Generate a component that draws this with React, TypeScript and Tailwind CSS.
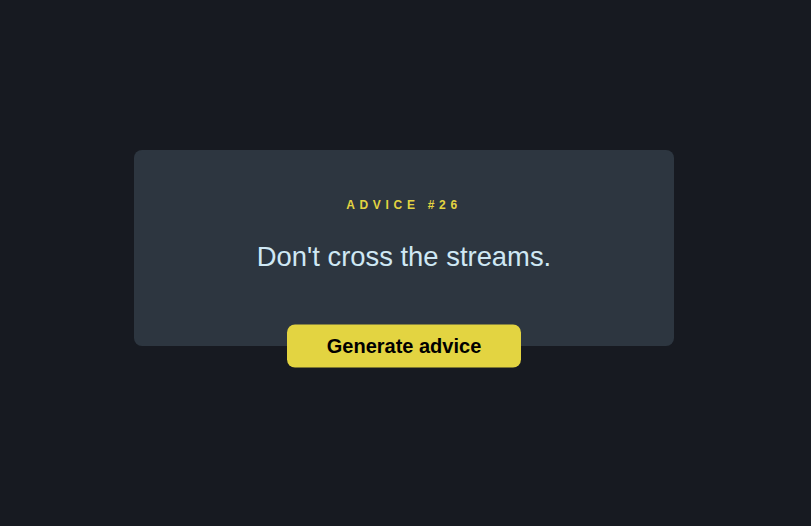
export default function App() {
  return (
    <div
      className="flex h-[526px] w-full items-center justify-center bg-[#171a21]"
      style={{ fontFamily: '"Liberation Sans", Arial, sans-serif' }}
    >
      <div className="relative -mt-[30px] ml-[-3px] flex h-[196px] w-[540px] flex-col items-center rounded-lg bg-[#2d3640] pt-[47px]">
        <p className="text-[12px] leading-4 font-bold tracking-[4.7px] text-[#e3d441]">
          ADVICE #26
        </p>
        <p className="mt-[28px] text-[27.4px] leading-8 text-[#cfe8f4]">
          Don't cross the streams.
        </p>
        <button className="absolute bottom-0 left-1/2 h-[43px] w-[234px] -translate-x-1/2 translate-y-1/2 rounded-lg bg-[#e3d441] pb-[2px] text-[20px] font-bold text-black">
          Generate advice
        </button>
      </div>
    </div>
  );
}
